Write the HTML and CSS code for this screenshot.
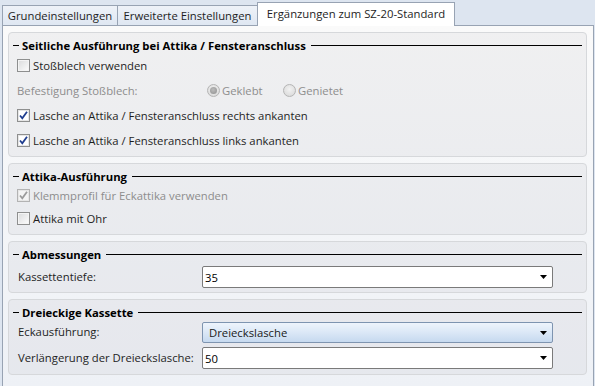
FILE: index.html
```html
<!DOCTYPE html>
<html lang="de">
<head>
<meta charset="utf-8">
<title>Ergänzungen zum SZ-20-Standard</title>
<link rel="stylesheet" href="styles.css">
</head>
<body>
<div class="window">
  <div class="tabs">
    <div class="tab t1">Grundeinstellungen</div>
    <div class="tab t2">Erweiterte Einstellungen</div>
    <div class="tab t3 active">Ergänzungen zum SZ-20-Standard</div>
  </div>
  <div class="panel">
    <section class="group g1">
      <div class="legend"><span class="dash"></span><span class="ltext">Seitliche Ausführung bei Attika / Fensteranschluss</span><span class="rule"></span></div>
      <div class="row"><span class="cb"></span><span>Stoßblech verwenden</span></div>
      <div class="row disabled">
        <span class="rlabel">Befestigung Stoßblech:</span>
        <span class="ropt first"><span class="radio checked"><span class="dot"></span></span>Geklebt</span>
        <span class="ropt"><span class="radio"></span>Genietet</span>
      </div>
      <div class="row"><span class="cb checked"><svg viewBox="0 0 11 11" width="11" height="11"><path d="M2 5.5 L4.3 8.3 L9 1.8" /></svg></span><span>Lasche an Attika / Fensteranschluss rechts ankanten</span></div>
      <div class="row"><span class="cb checked"><svg viewBox="0 0 11 11" width="11" height="11"><path d="M2 5.5 L4.3 8.3 L9 1.8" /></svg></span><span>Lasche an Attika / Fensteranschluss links ankanten</span></div>
    </section>
    <section class="group g2">
      <div class="legend"><span class="dash"></span><span class="ltext">Attika-Ausführung</span><span class="rule"></span></div>
      <div class="row disabled"><span class="cb checked"><svg viewBox="0 0 11 11" width="11" height="11"><path d="M2 5.5 L4.3 8.3 L9 1.8" /></svg></span><span>Klemmprofil für Eckattika verwenden</span></div>
      <div class="row"><span class="cb"></span><span>Attika mit Ohr</span></div>
    </section>
    <section class="group g3">
      <div class="legend"><span class="dash"></span><span class="ltext">Abmessungen</span><span class="rule"></span></div>
      <div class="frow"><span class="flabel">Kassettentiefe:</span><div class="combo"><span class="val">35</span><svg class="arrow" viewBox="0 0 7 4" width="7" height="4"><path d="M0 0 H7 L3.5 4 Z"/></svg></div></div>
    </section>
    <section class="group g4">
      <div class="legend"><span class="dash"></span><span class="ltext">Dreieckige Kassette</span><span class="rule"></span></div>
      <div class="frow"><span class="flabel">Eckausführung:</span><div class="combo hot"><span class="val">Dreieckslasche</span><svg class="arrow" viewBox="0 0 7 4" width="7" height="4"><path d="M0 0 H7 L3.5 4 Z"/></svg></div></div>
      <div class="frow"><span class="flabel">Verlängerung der Dreieckslasche:</span><div class="combo"><span class="val">50</span><svg class="arrow" viewBox="0 0 7 4" width="7" height="4"><path d="M0 0 H7 L3.5 4 Z"/></svg></div></div>
    </section>
  </div>
</div>
</body>
</html>
```
FILE: styles.css
```css
* { box-sizing: border-box; }
html, body { margin: 0; }
body {
  width: 595px;
  height: 386px;
  overflow: hidden;
  background: #dde5f0;
  font-family: "Open Sans", "Noto Sans", sans-serif;
  font-size: 11.3px;
  color: #1e1e1e;
}
.window { padding: 2px 1px 0 2px; }
.tabs {
  display: flex;
  align-items: flex-end;
  height: 23px;
  position: relative;
  z-index: 2;
}
.tab {
  height: 20px;
  border: 1px solid #98a3b3;
  border-bottom: none;
  background: linear-gradient(#eef2f8, #dfe7f2);
  text-align: center;
  line-height: 19px;
  white-space: nowrap;
  color: #1e1e1e;
}
.t1 { width: 116px; }
.t2 { width: 141px; margin-left: -1px; }
.t3 { width: 198px; margin-left: -1px; }
.tab.active {
  height: 24px;
  margin-bottom: -1px;
  background: #fff;
  line-height: 21px;
}
.panel {
  height: 362px;
  border: 1px solid #98a3b3;
  border-bottom: none;
  background: linear-gradient(#fafafa, #eef1f6);
  padding: 6px 6px 0 5px;
  display: flex;
  flex-direction: column;
  gap: 6px;
}
.group {
  border: 1px solid #d6d8db;
  border-radius: 4px;
  background: rgba(110, 115, 125, 0.07);
  padding: 4px 0 3px 0;
}
.legend {
  display: flex;
  align-items: center;
  height: 16px;
  padding: 0 4px 0 4px;
}
.dash { width: 6px; height: 1px; background: #000; margin-right: 3px; }
.ltext { font-weight: bold; color: #000; white-space: nowrap; }
.rule { flex: 1; height: 1px; background: #000; margin-left: 5px; }
.row {
  display: flex;
  align-items: center;
  height: 25px;
  padding-left: 8px;
  white-space: nowrap;
}
.g2 .row { height: 23px; }
.g2 { padding-bottom: 4px; }
.disabled { color: #8d8d8d; }
.cb {
  width: 13px;
  height: 13px;
  border: 1px solid #8e8f8f;
  box-shadow: inset 0 0 0 1px #f4f4f4;
  background: linear-gradient(135deg, #dadbdc, #fdfdfd);
  margin-right: 3px;
  display: flex;
  align-items: center;
  justify-content: center;
  flex: none;
}
.cb.checked { background: #fff; box-shadow: inset 0 0 0 1px #e6e6e6; }
.cb svg path { fill: none; stroke: #1f3d8f; stroke-width: 1.8; }
.disabled .cb { border-color: #b3b3b3; background: #f4f4f4; }
.disabled .cb svg path { stroke: #9b9b9b; }
.rlabel { width: 190px; }
.ropt { display: flex; align-items: center; }
.ropt.first { width: 76px; }
.radio {
  width: 13px;
  height: 13px;
  border-radius: 50%;
  border: 1px solid #b5b5b5;
  background: radial-gradient(circle at 50% 40%, #f2f2f2, #d6d6d6);
  margin-right: 2px;
  display: flex;
  align-items: center;
  justify-content: center;
  flex: none;
}
.radio .dot {
  width: 7px;
  height: 7px;
  border-radius: 50%;
  background: radial-gradient(circle at 45% 40%, #bcbcbc, #8f8f8f);
}
.frow {
  display: flex;
  align-items: center;
  padding-left: 9px;
  white-space: nowrap;
}
.flabel { width: 184px; margin-top: -2px; }
.g3 .frow { margin-top: 4px; }
.g3 { padding-bottom: 4px; }
.g4 .frow { margin-top: 2px; }
.g4 .frow + .frow { margin-top: 4px; }
.g4 { padding-bottom: 5px; }
.combo {
  width: 351px;
  height: 22px;
  border: 1px solid #7a7a7a;
  border-radius: 2px;
  background: #fff;
  display: flex;
  align-items: center;
  justify-content: space-between;
  padding: 0 5px 0 2px;
  color: #000;
}
.combo.hot {
  height: 21px;
  border-color: #7e94b0;
  background: linear-gradient(#eef4fc 0%, #dde9f7 45%, #c6d9ef 100%);
  padding-left: 6px;
  color: #1a1a1a;
}
.arrow path { fill: #000; }
```
